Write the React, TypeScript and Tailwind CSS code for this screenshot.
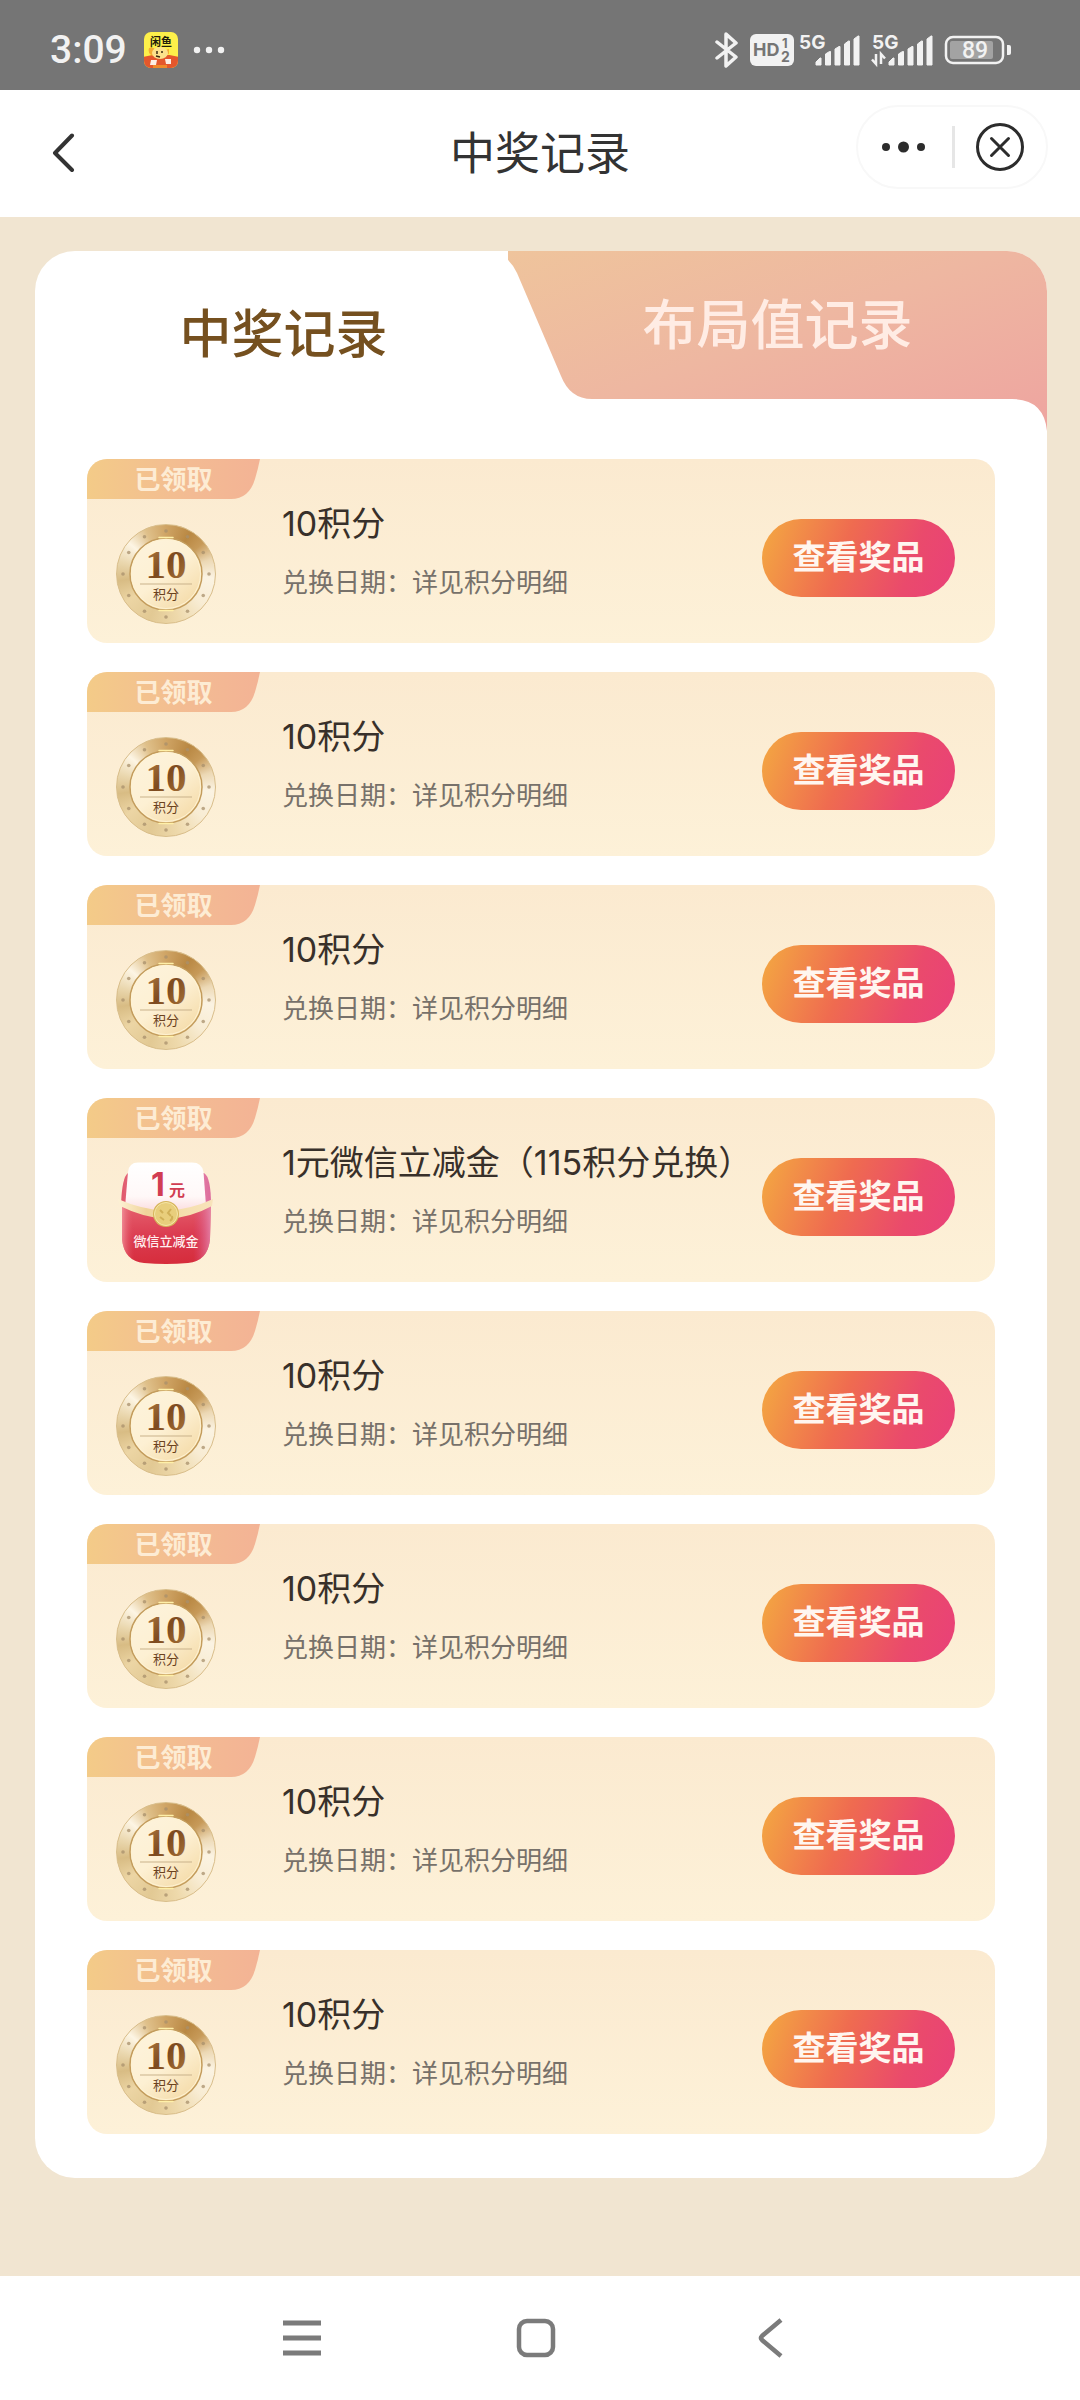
import React, { useState } from "react";

type PrizeKind = "points" | "cash";

interface PrizeRecord {
  id: number;
  kind: PrizeKind;
  title: string;
  date: string;
}

const records: PrizeRecord[] = [
  { id: 1, kind: "points", title: "10积分", date: "详见积分明细" },
  { id: 2, kind: "points", title: "10积分", date: "详见积分明细" },
  { id: 3, kind: "points", title: "10积分", date: "详见积分明细" },
  { id: 4, kind: "cash", title: "1元微信立减金（115积分兑换）", date: "详见积分明细" },
  { id: 5, kind: "points", title: "10积分", date: "详见积分明细" },
  { id: 6, kind: "points", title: "10积分", date: "详见积分明细" },
  { id: 7, kind: "points", title: "10积分", date: "详见积分明细" },
  { id: 8, kind: "points", title: "10积分", date: "详见积分明细" },
];

const serif = '"Liberation Serif", "Noto Sans CJK SC", serif';
const sans = 'Inter, "Noto Sans CJK SC", sans-serif';

// Shared gradients, referenced by id from every row.
const Gradients: React.FC = () => (
  <svg width="0" height="0" className="absolute" aria-hidden="true">
    <defs>
      <linearGradient id="tabFill" x1="0" y1="0" x2="1" y2="0.9">
        <stop offset="0" stopColor="#efc49c" />
        <stop offset="0.5" stopColor="#eeb7a1" />
        <stop offset="1" stopColor="#eea6a0" />
      </linearGradient>
      <linearGradient id="badgeFill" x1="0" y1="0" x2="1" y2="0">
        <stop offset="0" stopColor="#f3cb88" />
        <stop offset="0.6" stopColor="#f3bb93" />
        <stop offset="1" stopColor="#f3b395" />
      </linearGradient>
      <linearGradient id="coinFace" x1="0.1" y1="0" x2="0.9" y2="1">
        <stop offset="0" stopColor="#fdf3dc" />
        <stop offset="0.5" stopColor="#fdf0d3" />
        <stop offset="1" stopColor="#f3d8a2" />
      </linearGradient>
      <linearGradient id="coinDigits" x1="0" y1="0" x2="1" y2="1">
        <stop offset="0" stopColor="#b98448" />
        <stop offset="0.5" stopColor="#7d4a1f" />
        <stop offset="1" stopColor="#b07a3c" />
      </linearGradient>
      <linearGradient id="pouchBack" x1="0" y1="0" x2="1" y2="0">
        <stop offset="0" stopColor="#e0566a" />
        <stop offset="0.5" stopColor="#f4b5c4" />
        <stop offset="1" stopColor="#dd6c9c" />
      </linearGradient>
      <linearGradient id="pouchPaper" x1="0" y1="0" x2="0" y2="1">
        <stop offset="0" stopColor="#ffffff" />
        <stop offset="0.6" stopColor="#fff8f8" />
        <stop offset="1" stopColor="#f9cfd2" />
      </linearGradient>
      <linearGradient id="pouchFront" x1="0.3" y1="0" x2="0.4" y2="1">
        <stop offset="0" stopColor="#e5626f" />
        <stop offset="0.55" stopColor="#db3b50" />
        <stop offset="1" stopColor="#d62d3c" />
      </linearGradient>
      <linearGradient id="pouchSide" x1="0" y1="0" x2="1" y2="0">
        <stop offset="0" stopColor="#f6a0a8" stopOpacity="0.7" />
        <stop offset="0.14" stopColor="#e0485a" stopOpacity="0" />
        <stop offset="0.8" stopColor="#d9508a" stopOpacity="0" />
        <stop offset="1" stopColor="#e58fb8" stopOpacity="0.8" />
      </linearGradient>
      <linearGradient id="ribbon" x1="0" y1="0" x2="1" y2="0">
        <stop offset="0" stopColor="#fdf2d6" />
        <stop offset="0.3" stopColor="#f0d49a" />
        <stop offset="0.7" stopColor="#f5dfae" />
        <stop offset="1" stopColor="#f8e3bb" />
      </linearGradient>
    </defs>
  </svg>
);

const studs = Array.from({ length: 12 }, (_, i) => {
  const angle = (i * Math.PI) / 6;
  return { x: 52 + 43 * Math.cos(angle), y: 52 + 43 * Math.sin(angle) };
});

const CoinIcon: React.FC = () => (
  <div className="relative mt-8 size-[104px] shrink-0">
    <div className="absolute inset-[2px] rounded-full border border-[#d8bd8a] bg-[conic-gradient(#cfa465,#b98843_30deg,#c79a59_50deg,#ecd8b4_72deg,#fbf3e2_95deg,#f8ecd3_130deg,#eed9ab_165deg,#e2c994_200deg,#ecd5a4_235deg,#d8bc84_262deg,#ead7ae_285deg,#fdf5e4_310deg,#dfc08a_335deg,#cfa465)]" />
    <svg viewBox="0 0 104 104" className="absolute inset-0 size-full" role="img" aria-label="10积分">
      {studs.map((stud, i) => (
        <circle key={i} cx={stud.x} cy={stud.y} r="1.8" fill="#a8906c" fillOpacity="0.75" />
      ))}
      <circle cx="52" cy="52" r="36" fill="url(#coinFace)" stroke="#c39c5c" strokeWidth="1.5" />
      <circle cx="52" cy="52" r="34.5" fill="none" stroke="#fff3d3" strokeWidth="1" />
      <path d="M45 15.5h14M45 88.5h14" stroke="#fff0a8" strokeWidth="1.5" strokeLinecap="round" />
      <text x="52" y="56" textAnchor="middle" fontFamily={serif} fontWeight="700" fontSize="41" fill="url(#coinDigits)">
        10
      </text>
      <path d="M26 62h52" stroke="#c9b28b" strokeWidth="1" />
      <text x="52" y="77" textAnchor="middle" fontFamily={serif} fontSize="13" fill="#6b421d">
        积分
      </text>
    </svg>
  </div>
);

const PouchIcon: React.FC = () => (
  <svg viewBox="0 0 104 104" className="mt-8 size-[104px] shrink-0" role="img" aria-label="1元微信立减金">
    <path d="M14 12Q8 16 7 44h90Q97 16 90 12z" fill="url(#pouchBack)" />
    <path d="M24 1.5H78Q88 1.5 89.5 11L93 58H10L14 11Q15 1.5 24 1.5z" fill="url(#pouchPaper)" />
    <path d="M8 42Q30 54 52 56Q74 54 97 42L96 78Q94 100 74 102Q52 104 30 102Q10 100 8 78z" fill="url(#pouchFront)" />
    <path d="M8 42Q30 54 52 56Q74 54 97 42L96 78Q94 100 74 102Q52 104 30 102Q10 100 8 78z" fill="url(#pouchSide)" />
    <path d="M4 38Q26 48 52 50Q78 48 99 38L98 45Q76 57 52 58Q28 56 6 45z" fill="url(#ribbon)" />
    <circle cx="52" cy="53" r="13" fill="#d6b45a" />
    <circle cx="52" cy="53" r="11.5" fill="#e8ce7c" stroke="#f6e6a8" strokeWidth="1" />
    <path d="M46 49l3 3M46 56l4 3M57 48l-3 4 3 3M56 60q3-2 2-5" fill="none" stroke="#d0b058" strokeWidth="2" />
    <text x="37" y="35" fontFamily={sans} fontWeight="700" fontSize="32" fill="#d13d52">
      1
    </text>
    <text x="55" y="35" fontFamily={sans} fontWeight="700" fontSize="16" fill="#d13d52">
      元
    </text>
    <text x="52" y="85" textAnchor="middle" fontFamily={sans} fontSize="13" fontWeight="500" fill="#fff1f1">
      微信立减金
    </text>
  </svg>
);

const SignalBars: React.FC<{ transfer?: boolean }> = ({ transfer }) => (
  <svg viewBox="-2 -4 64 42" className="h-[42px] w-16" fill="#f2f2f2" aria-hidden="true">
    <text x="0" y="16" fontFamily={sans} fontWeight="700" fontSize="19">
      5G
    </text>
    <path d="M17 32v-3l4-4h1v7zM26.5 32V21l4-2.5h1V32zM36 32V16l4-2.5h1V32zM45.500 32V11l4-3h1v24zM55 32V6l4-3h1v29z" stroke="#f2f2f2" strokeLinejoin="round" />
    {transfer && (
      <path d="M4 21v10L0 26.5M9 31V21l4 4.5" fill="none" stroke="#f2f2f2" strokeWidth="2.5" />
    )}
  </svg>
);

const StatusBar: React.FC = () => (
  <div className="flex h-[90px] items-center justify-between bg-[#757575] pt-[9px] pr-[68px] pl-[50px]">
    <div className="flex items-center">
      <span className="font-[Roboto] text-[39px] leading-[40px] font-medium text-[#f2f2f2]">3:09</span>
      <svg viewBox="0 0 36 36" className="ml-4 size-9" aria-hidden="true">
        <clipPath id="appClip">
          <rect x="1" y="0" width="34" height="36" rx="7" />
        </clipPath>
        <g clipPath="url(#appClip)">
          <rect width="36" height="36" fill="#fdf04a" />
          <path d="M0 25q18-5 36 0v11H0z" fill="#e4572c" />
          <path d="M6 16q5-2 7 3l-3 5q-6-3-4-8zM26 17q-3 0-4 4l4 1z" fill="#f4ad32" />
          <ellipse cx="17" cy="21" rx="8" ry="6" fill="#fce28c" />
          <path d="M14 19v3M19 19v2M13 24l4 1" stroke="#3a2a12" strokeWidth="1.5" />
          <path d="M8 28h6l-1 5H7zM22 27h6v5h-5z" fill="#fdeee4" />
          <path d="M10 33h14v3H10z" fill="#f08a2a" />
        </g>
        <text x="18" y="14" textAnchor="middle" fontFamily={sans} fontSize="11" fontWeight="700" fill="#1e1c0c">
          闲鱼
        </text>
      </svg>
      <svg viewBox="0 0 32 8" className="ml-[14px] h-2 w-8" fill="#f2f2f2" aria-hidden="true">
        <circle cx="4" cy="4" r="3.2" />
        <circle cx="16" cy="4" r="3.2" />
        <circle cx="28" cy="4" r="3.2" />
      </svg>
    </div>
    <div className="flex items-center">
      <svg viewBox="0 0 24 36" className="h-9 w-6" fill="none" stroke="#f2f2f2" strokeWidth="3.500" strokeLinejoin="round" strokeLinecap="round" aria-hidden="true">
        <path d="M2 10l19 15-10 9V2l10 9L2 26" />
      </svg>
      <svg viewBox="0 0 44 34" className="ml-[11px] h-[34px] w-11" aria-hidden="true">
        <rect y="1" width="44" height="32" rx="6" fill="#f2f2f2" />
        <g fill="#757575" fontFamily={sans} fontWeight="700">
          <text x="3" y="23" fontSize="18">HD</text>
          <text x="32" y="15" fontSize="13">1</text>
          <text x="31" y="29" fontSize="14">2</text>
        </g>
      </svg>
      <div className="ml-[3px]">
        <SignalBars />
      </div>
      <div className="ml-[9px]">
        <SignalBars transfer />
      </div>
      <svg viewBox="0 0 68 30" className="ml-[10px] h-[30px] w-[68px]" aria-hidden="true">
        <rect x="2" y="2" width="57" height="26" rx="7" fill="none" stroke="#f2f2f2" strokeWidth="2.5" />
        <rect x="6" y="6" width="43" height="18" rx="2" fill="#a3a3a3" />
        <path d="M63 10h2q2 0 2 2v6q0 2-2 2h-2z" fill="#f2f2f2" />
        <text x="31" y="23" textAnchor="middle" fontFamily="Roboto, sans-serif" fontWeight="500" fontSize="23" fill="#f2f2f2">
          89
        </text>
      </svg>
    </div>
  </div>
);

const Header: React.FC = () => (
  <header className="grid h-[127px] grid-cols-[1fr_auto_1fr] items-center bg-white px-8">
    <button type="button" aria-label="返回" className="justify-self-start pl-[18px]">
      <svg viewBox="0 0 28 42" className="h-[42px] w-7" fill="none" stroke="#333" strokeWidth="4" strokeLinecap="round" strokeLinejoin="round">
        <path d="M22 2.5L5 20l17 17" />
      </svg>
    </button>
    <h1 className="text-[45px] leading-[60px] text-[#333]">中奖记录</h1>
    <div className="mb-[14px] flex h-[84px] w-48 items-center justify-between justify-self-end rounded-full border-2 border-[#f8f8f8] pr-[22px] pl-6">
      <button type="button" aria-label="更多">
        <svg viewBox="0 0 44 12" className="h-3 w-11" fill="#2c2c2c">
          <circle cx="4" cy="6" r="4" />
          <circle cx="21.5" cy="6" r="5.5" />
          <circle cx="39" cy="6" r="4" />
        </svg>
      </button>
      <span className="ml-1 h-[42px] w-[3px] bg-[#e6e6e6]" />
      <button type="button" aria-label="关闭">
        <svg viewBox="0 0 48 48" className="size-12" fill="none" stroke="#2c2c2c" strokeWidth="3" strokeLinecap="round">
          <circle cx="24" cy="24" r="22.5" />
          <path d="M15.5 15.5l17 17M32.5 15.5l-17 17" />
        </svg>
      </button>
    </div>
  </header>
);

const RecordRow: React.FC<{ record: PrizeRecord }> = ({ record }) => (
  <li className="relative flex h-[184px] items-center overflow-hidden rounded-[20px] bg-linear-to-b from-[#fbead0] to-[#fdf1d8] pt-[14px] pr-10 pl-[27px]">
    <div className="absolute top-0 left-0 h-10 w-[173px]">
      <svg viewBox="0 0 173 40" className="absolute inset-0 size-full" aria-hidden="true">
        <path d="M0 0h173q-2 10-5 20Q162 40 144 40H0z" fill="url(#badgeFill)" />
      </svg>
      <span className="relative block text-center text-[26px] leading-[42px] font-bold text-[#fdecd4]">已领取</span>
    </div>
    {record.kind === "points" ? <CoinIcon /> : <PouchIcon />}
    <div className="ml-16 min-w-0 flex-1 pb-4 whitespace-nowrap">
      <h2 className="text-[34px] leading-[44px] text-[#38302a]">{record.title}</h2>
      <p className="mt-[21px] text-[26px] leading-8 text-[#77716a]">兑换日期：{record.date}</p>
    </div>
    <button
      type="button"
      className="h-[78px] w-[193px] shrink-0 rounded-full bg-[linear-gradient(110deg,#f3a243_5%,#ef6b50_42%,#ea4a6c_75%,#e94079)] text-[33px] font-bold text-[#fff6f0]"
    >
      查看奖品
    </button>
  </li>
);

export default function App() {
  const [tab, setTab] = useState<"prize" | "layout">("prize");

  return (
    <div className="flex min-h-screen flex-col bg-[#f1e5d1] font-[Inter,'Noto_Sans_CJK_SC',sans-serif]">
      <Gradients />
      <StatusBar />
      <Header />

      <main className="flex-1 pt-[34px] pr-[33px] pb-[97px] pl-[35px]">
        <section className="overflow-hidden rounded-[40px] bg-white">
          <div role="tablist" className="grid h-[164px] grid-cols-[473fr_539fr] items-start">
            <button
              type="button"
              role="tab"
              aria-selected={tab === "prize"}
              onClick={() => setTab("prize")}
              className="h-[164px] pt-1 pl-6 text-[52px] font-medium text-[#75501f]"
            >
              中奖记录
            </button>
            <button
              type="button"
              role="tab"
              aria-selected={tab === "layout"}
              onClick={() => setTab("layout")}
              className="relative h-[148px] text-[54px] font-medium text-[#ffece4]"
            >
              <svg viewBox="0 0 539 180" preserveAspectRatio="none" className="absolute top-0 left-0 h-[180px] w-full" aria-hidden="true">
                <path d="M0 0h539v180Q536 148 504 148H84Q62 148 53 125L9 22Q6 15 0 9z" fill="url(#tabFill)" />
              </svg>
              <span className="relative">布局值记录</span>
            </button>
          </div>

          <ul className="flex flex-col gap-[29px] px-[52px] py-11">
            {records.map((record) => (
              <RecordRow key={record.id} record={record} />
            ))}
          </ul>
        </section>
      </main>

      <nav className="flex h-[124px] items-center justify-center gap-[194px] bg-white pr-2 pb-[1px]">
        <button type="button" aria-label="最近任务">
          <svg viewBox="0 0 40 40" className="size-10" stroke="#7b7b7b" strokeWidth="5">
            <path d="M1 5h38M1 20h38M1 35h38" />
          </svg>
        </button>
        <button type="button" aria-label="主屏幕">
          <svg viewBox="0 0 40 40" className="size-10" fill="none" stroke="#7b7b7b" strokeWidth="4.5">
            <rect x="3" y="3" width="34" height="34" rx="8" />
          </svg>
        </button>
        <button type="button" aria-label="后退">
          <svg viewBox="0 0 40 40" className="size-10" fill="none" stroke="#7b7b7b" strokeWidth="4.5">
            <path d="M31 2L12 18q-2 2 0 4l19 16" />
          </svg>
        </button>
      </nav>
    </div>
  );
}
